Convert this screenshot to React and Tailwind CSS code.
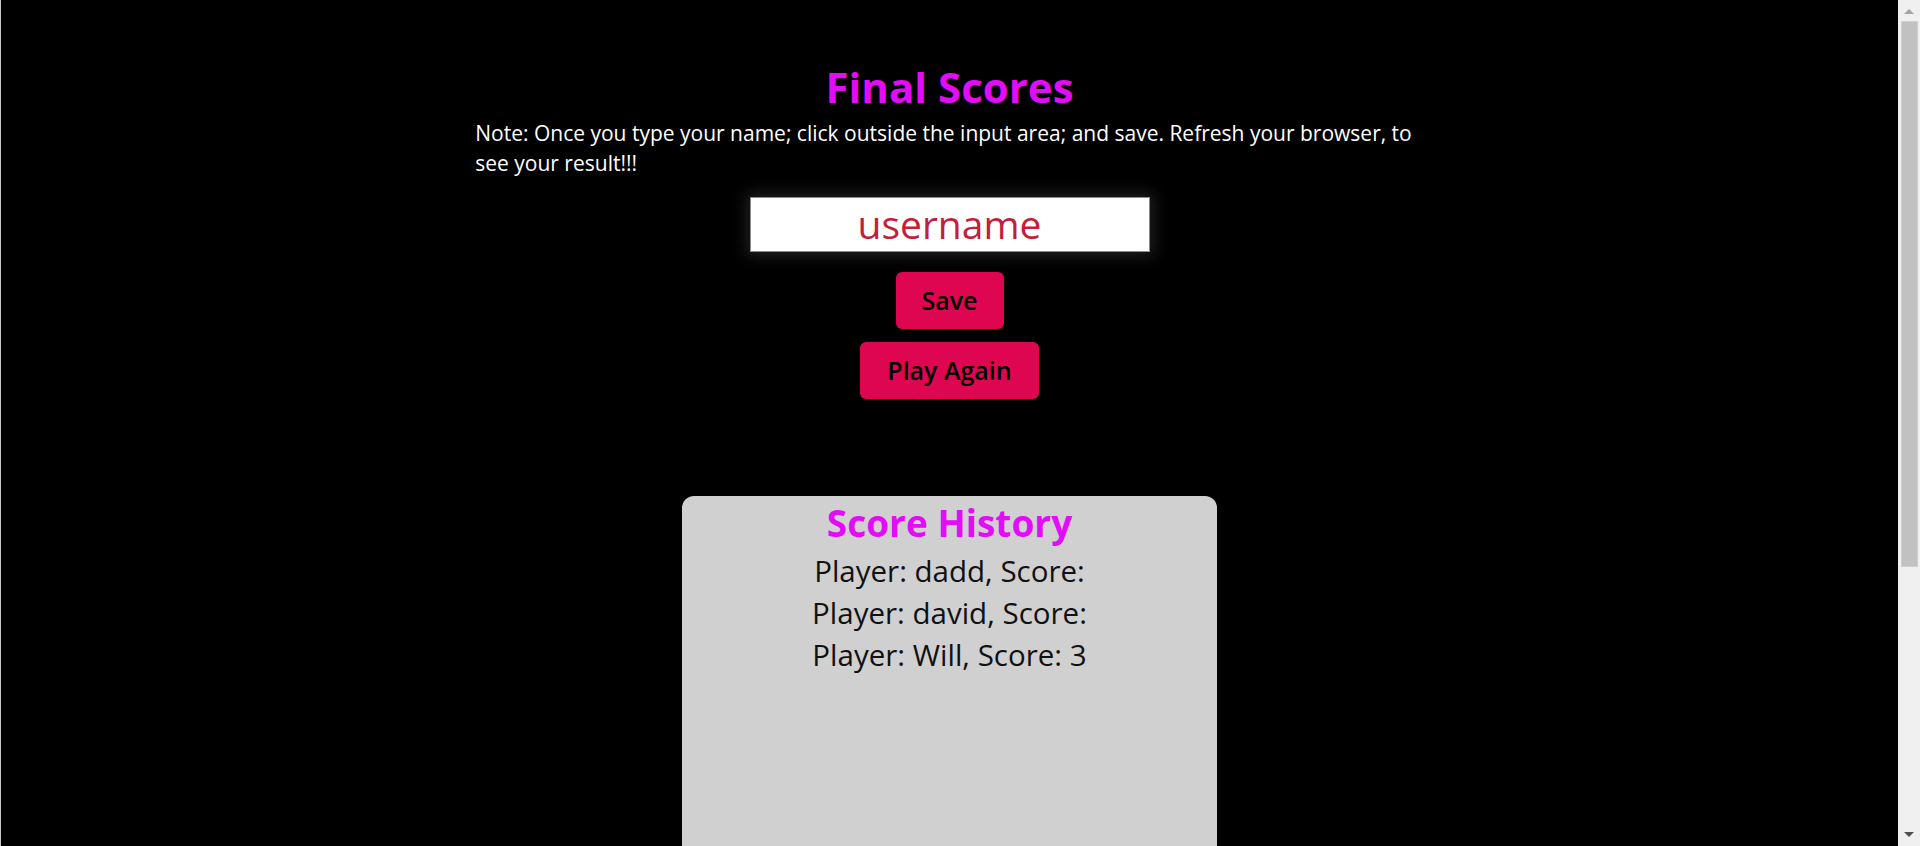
export default function App() {
  const scores = [
    { name: "dadd", score: "" },
    { name: "david", score: "" },
    { name: "Will", score: "3" },
  ];

  return (
    <div className="h-[846px] overflow-hidden flex bg-black font-['Open_Sans',sans-serif]">
      <div className="flex-1 border-l border-[#c8c8c8]">
        <div className="w-1/2 mx-auto pt-[62px] flex flex-col items-center">
          <h1 className="text-[42px] leading-[50px] font-bold text-[#e30cf7]">Final Scores</h1>
          <p className="self-stretch text-[21px] leading-[30px] text-white mt-[6px]">
            Note: Once you type your name; click outside the input area; and save. Refresh your browser, to see your result!!!
          </p>
          <input
            type="text"
            placeholder="username"
            className="mt-[19px] w-[400px] h-[55px] bg-white border border-[#8a8a8a] text-center text-[39px] text-[#c41e3a] placeholder:text-[#c41e3a] outline-none shadow-[0_0_14px_4px_rgba(70,70,70,0.45)]"
          />
          <button className="mt-[20px] w-[108px] h-[57px] rounded-[6px] bg-[#de0650] text-black text-[25px] font-semibold">
            Save
          </button>
          <button className="mt-[13px] w-[179px] h-[57px] rounded-[6px] bg-[#de0650] text-black text-[25px] font-semibold">
            Play Again
          </button>
        </div>
        <div className="mx-auto mt-[97px] w-[535px] h-[1480px] bg-[#d0d0d0] rounded-[12px] flex flex-col items-center">
          <h2 className="mt-[2px] text-[37px] leading-[50px] font-bold text-[#e30cf7]">Score History</h2>
          <ul className="mt-[2px] flex flex-col items-center">
            {scores.map((s) => (
              <li key={s.name} className="text-[29.5px] leading-[42px] text-[#111]">
                Player: {s.name}, Score: {s.score}
              </li>
            ))}
          </ul>
        </div>
      </div>
      <div className="w-[22px] bg-[#f0f0f0] flex flex-col items-center">
        <div className="h-[21px] w-full flex items-start justify-center pt-[9px]">
          <div className="w-0 h-0 border-l-[5px] border-r-[5px] border-b-[5px] border-l-transparent border-r-transparent border-b-[#a3a3a3]" />
        </div>
        <div className="w-[17px] h-[546px] bg-[#c1c1c1] border border-[#cfcfcf]" />
        <div className="flex-1" />
        <div className="h-[21px] w-full flex items-end justify-center pb-[9px]">
          <div className="w-0 h-0 border-l-[5px] border-r-[5px] border-t-[5px] border-l-transparent border-r-transparent border-t-[#505050]" />
        </div>
      </div>
    </div>
  );
}
